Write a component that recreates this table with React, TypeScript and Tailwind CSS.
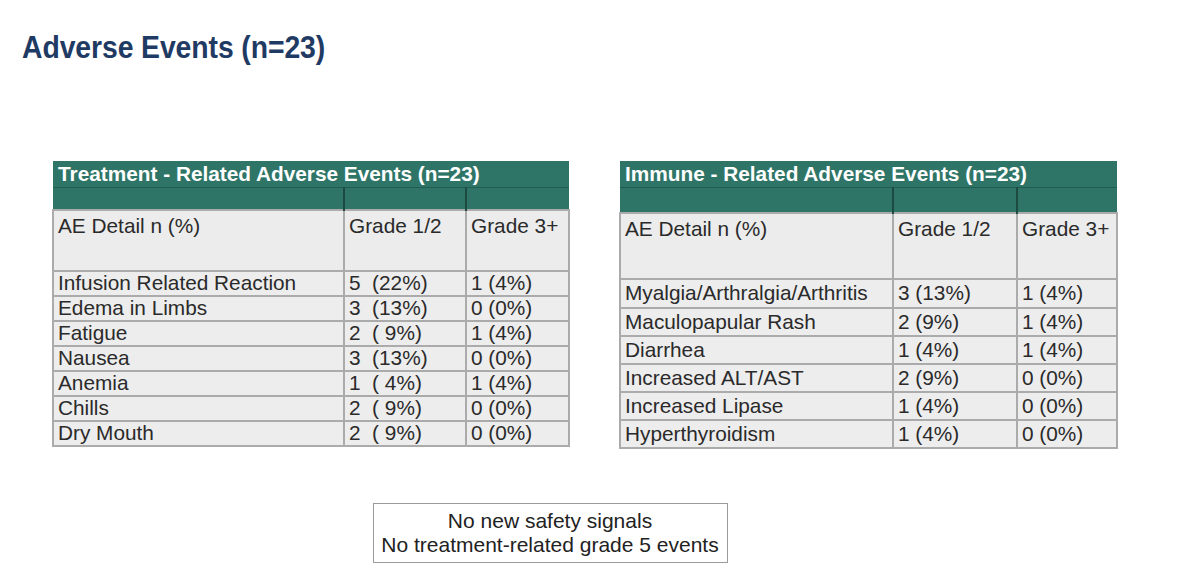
// Adverse Events slide

import React from 'react';

type Row = [string, string, string];

const treatmentRows: Row[] = [
  ['Infusion Related Reaction', '5  (22%)', '1 (4%)'],
  ['Edema in Limbs', '3  (13%)', '0 (0%)'],
  ['Fatigue', '2  ( 9%)', '1 (4%)'],
  ['Nausea', '3  (13%)', '0 (0%)'],
  ['Anemia', '1  ( 4%)', '1 (4%)'],
  ['Chills', '2  ( 9%)', '0 (0%)'],
  ['Dry Mouth', '2  ( 9%)', '0 (0%)'],
];

const immuneRows: Row[] = [
  ['Myalgia/Arthralgia/Arthritis', '3 (13%)', '1 (4%)'],
  ['Maculopapular Rash', '2 (9%)', '1 (4%)'],
  ['Diarrhea', '1 (4%)', '1 (4%)'],
  ['Increased ALT/AST', '2 (9%)', '0 (0%)'],
  ['Increased Lipase', '1 (4%)', '0 (0%)'],
  ['Hyperthyroidism', '1 (4%)', '0 (0%)'],
];

function AeTable({
  title,
  rows,
  cols,
  greenH,
  headH,
  rowH,
  firstRowH,
}: {
  title: string;
  rows: Row[];
  cols: [string, string, string];
  greenH: string;
  headH: string;
  rowH: string;
  firstRowH: string;
}) {
  return (
    <table className="border-collapse text-[20.8px] leading-none text-[#2a2a2a]">
      <colgroup>
        <col className={cols[0]} />
        <col className={cols[1]} />
        <col className={cols[2]} />
      </colgroup>
      <tbody>
        {/* título verde */}
        <tr className="h-[26px] bg-[#2f7567]">
          <td colSpan={3} className="border-b border-[#215c50] px-[5px] pt-[1px] text-[20.8px] font-bold text-white">
            {title}
          </td>
        </tr>
        <tr className={`${greenH} bg-[#2f7567]`}>
          <td />
          <td className="border-l-2 border-[#1d4a41]" />
          <td className="border-l-2 border-[#1d4a41]" />
        </tr>
        {/* cabeçalho */}
        <tr className={`${headH} bg-[#ececec] align-top`}>
          <td className="border-2 border-[#ababab] px-[4px] pt-[5px]">AE Detail n (%)</td>
          <td className="border-2 border-[#ababab] px-[4px] pt-[5px]">Grade 1/2</td>
          <td className="border-2 border-[#ababab] px-[4px] pt-[5px]">Grade 3+</td>
        </tr>
        {rows.map((r, i) => (
          <tr key={r[0]} className={`${i === 0 ? firstRowH : rowH} bg-[#ededed]`}>
            <td className="border-2 border-[#ababab] px-[4px] whitespace-pre">{r[0]}</td>
            <td className="border-2 border-[#ababab] px-[4px] whitespace-pre">{r[1]}</td>
            <td className="border-2 border-[#ababab] px-[4px] whitespace-pre">{r[2]}</td>
          </tr>
        ))}
      </tbody>
    </table>
  );
}

export default function App() {
  return (
    <div className="h-[587px] w-[1200px] overflow-hidden bg-white font-['Liberation_Sans',Arial,sans-serif]">
      <div className="pl-[22px] pt-[32px]">
        <h1 className="origin-left scale-x-[0.915] text-[31px] font-bold leading-none tracking-[-0.1px] text-[#1f3a63]">
          Adverse Events (n=23)
        </h1>
      </div>

      <div className="mt-[98px] flex items-start gap-[49px] pl-[52px]">
        <AeTable
          title="Treatment - Related Adverse Events (n=23)"
          rows={treatmentRows}
          cols={['w-[291px]', 'w-[122px]', 'w-[103px]']}
          greenH="h-[23px]"
          headH="h-[61px]"
          rowH="h-[25px]"
          firstRowH="h-[25px]"
        />
        <AeTable
          title="Immune - Related Adverse Events (n=23)"
          rows={immuneRows}
          cols={['w-[273px]', 'w-[124px]', 'w-[100px]']}
          greenH="h-[26px]"
          headH="h-[66px]"
          rowH="h-[28px]"
          firstRowH="h-[29px]"
        />
      </div>

      <div className="mt-[54px] flex justify-center">
        <div className="ml-[-100px] w-[355px] border border-[#9a9a9a] py-[5px] text-center text-[21px] leading-[24px] text-[#222]">
          <p>No new safety signals</p>
          <p>No treatment-related grade 5 events</p>
        </div>
      </div>
    </div>
  );
}
